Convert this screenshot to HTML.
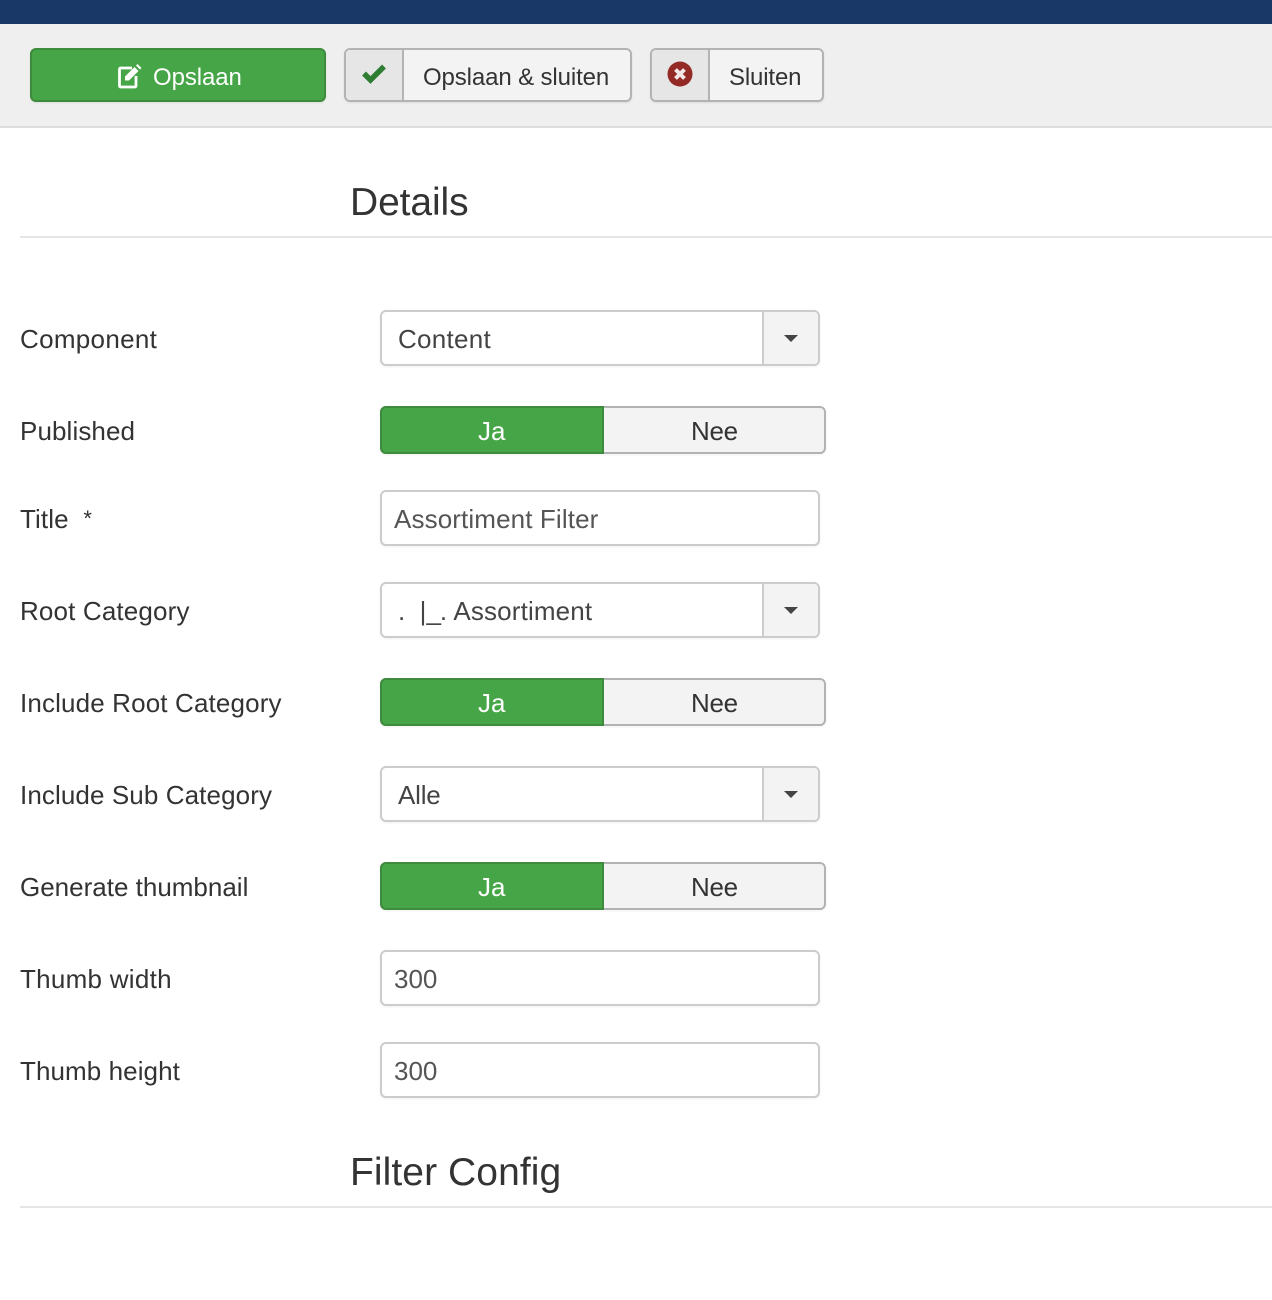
<!DOCTYPE html>
<html><head><meta charset="utf-8"><style>
html,body{margin:0;padding:0;background:#fff}
body{width:1272px;height:1300px;position:relative;overflow:hidden;font-family:"Liberation Sans",Arial,sans-serif;font-size:26px;color:#333}
.a,.t{position:absolute}
.t{white-space:nowrap;line-height:30px}
.bt{font-size:24px}
.box{position:absolute;box-sizing:border-box;border-radius:6px}
.btn{border:2px solid #b3b3b3;background:#f3f3f3;height:54px;top:48px;box-shadow:0 1px 2px rgba(0,0,0,.08);overflow:hidden}
.ic{position:absolute;left:0;top:0;bottom:0;width:56px;background:#e6e6e6;border-right:2px solid #b3b3b3}
.sel,.inp{left:380px;width:440px;height:56px;background:#fff;border:2px solid #ccc;box-shadow:0 1px 2px rgba(0,0,0,.06);overflow:hidden}
.sel i{position:absolute;right:0;top:0;bottom:0;width:54px;background:#f3f3f3;border-left:2px solid #ccc}
.sel i:after{content:"";position:absolute;left:20px;top:23px;border:7px solid transparent;border-top:7px solid #444;border-bottom:0}
.tog{left:380px;width:446px;height:48px;background:#f3f3f3;border:2px solid #b3b3b3;box-shadow:0 1px 2px rgba(0,0,0,.06)}
.tog b{position:absolute;left:-2px;top:-2px;bottom:-2px;width:224px;background:#46a546;border:2px solid #3d8b3d;box-sizing:border-box;border-radius:6px 0 0 6px}
.lab{left:20px}
.val{color:#555}
.nee{left:691px;letter-spacing:-.3px}
.h{font-size:39px;line-height:44px;left:350px;color:#333}
.hr{position:absolute;left:20px;right:0;height:2px;background:#e5e5e5}
</style></head><body>
<div class="a" style="left:0;top:0;width:1272px;height:24px;background:#1a3867"></div>
<div class="a" style="left:0;top:24px;width:1272px;height:102px;background:#efefef"></div>
<div class="a" style="left:0;top:126px;width:1272px;height:2px;background:#ddd"></div>

<div class="box" style="left:30px;top:48px;width:296px;height:54px;background:#46a546;border:2px solid #3d8b3d;box-shadow:0 1px 2px rgba(0,0,0,.08)"></div>
<svg class="a" style="left:116px;top:63px" width="26" height="26" viewBox="0 0 26 26"><path d="M16 5H5Q3.500 5 3.500 6.500V22.500Q3.500 24 5 24H18.500Q20 24 20 22.500V13" fill="none" stroke="#fff" stroke-width="2.800"/><path d="M9 13.500L18.500 4l4 4L13 17.500H9z" fill="#fff"/><path d="M20 2.500l1.500-1.500 4 4L24 6.500z" fill="#fff"/></svg>
<div class="t bt" style="left:153px;top:63px;color:#fff;letter-spacing:-.1px">Opslaan</div>

<div class="box btn" style="left:344px;width:288px"><div class="ic"></div></div>
<svg class="a" style="left:361px;top:63px" width="26" height="22" viewBox="0 0 26 22"><path d="M3 10.500l6.500 6.500L23 3.500" fill="none" stroke="#2f7d32" stroke-width="5.500"/></svg>
<div class="t bt" style="left:423px;top:63px;letter-spacing:-.12px">Opslaan &amp; sluiten</div>

<div class="box btn" style="left:650px;width:174px"><div class="ic"></div></div>
<svg class="a" style="left:667px;top:61px" width="26" height="26" viewBox="0 0 26 26"><circle cx="13" cy="13" r="12.500" fill="#942a25"/><path d="M8.500 8.500l9 9M17.500 8.500l-9 9" stroke="#f3e6e6" stroke-width="4"/></svg>
<div class="t bt" style="left:729px;top:63px;letter-spacing:-.15px">Sluiten</div>

<div class="t h" style="top:181px;letter-spacing:-.1px">Details</div>
<div class="hr" style="top:236px"></div>

<div class="t lab" style="top:324px;letter-spacing:.3px">Component</div>
<div class="box sel" style="top:310px"><i></i></div>
<div class="t" style="left:398px;top:324px;color:#444;letter-spacing:.28px">Content</div>

<div class="t lab" style="top:416px;letter-spacing:.1px">Published</div>
<div class="box tog" style="top:406px"><b></b></div>
<div class="t" style="left:478px;top:416px;color:#fff">Ja</div>
<div class="t nee" style="top:416px">Nee</div>

<div class="t lab" style="top:504px;letter-spacing:.1px">Title &nbsp;<span style="font-size:22px;position:relative;top:-2px">*</span></div>
<div class="box inp" style="top:490px"></div>
<div class="t val" style="left:394px;top:504px;letter-spacing:.12px">Assortiment Filter</div>

<div class="t lab" style="top:596px;letter-spacing:.15px">Root Category</div>
<div class="box sel" style="top:582px"><i></i></div>
<div class="t" style="left:398px;top:596px;color:#444">. &nbsp;|<span style="letter-spacing:-1px">_.</span> <span style="letter-spacing:.15px">Assortiment</span></div>

<div class="t lab" style="top:688px;letter-spacing:.14px">Include Root Category</div>
<div class="box tog" style="top:678px"><b></b></div>
<div class="t" style="left:478px;top:688px;color:#fff">Ja</div>
<div class="t nee" style="top:688px">Nee</div>

<div class="t lab" style="top:780px;letter-spacing:.1px">Include Sub Category</div>
<div class="box sel" style="top:766px"><i></i></div>
<div class="t" style="left:398px;top:780px;color:#444;letter-spacing:-.2px">Alle</div>

<div class="t lab" style="top:872px">Generate thumbnail</div>
<div class="box tog" style="top:862px"><b></b></div>
<div class="t" style="left:478px;top:872px;color:#fff">Ja</div>
<div class="t nee" style="top:872px">Nee</div>

<div class="t lab" style="top:964px;letter-spacing:.27px">Thumb width</div>
<div class="box inp" style="top:950px"></div>
<div class="t val" style="left:394px;top:964px">300</div>

<div class="t lab" style="top:1056px;letter-spacing:.08px">Thumb height</div>
<div class="box inp" style="top:1042px"></div>
<div class="t val" style="left:394px;top:1056px">300</div>

<div class="t h" style="top:1151px;letter-spacing:.08px">Filter Config</div>
<div class="hr" style="top:1206px"></div>
</body></html>
